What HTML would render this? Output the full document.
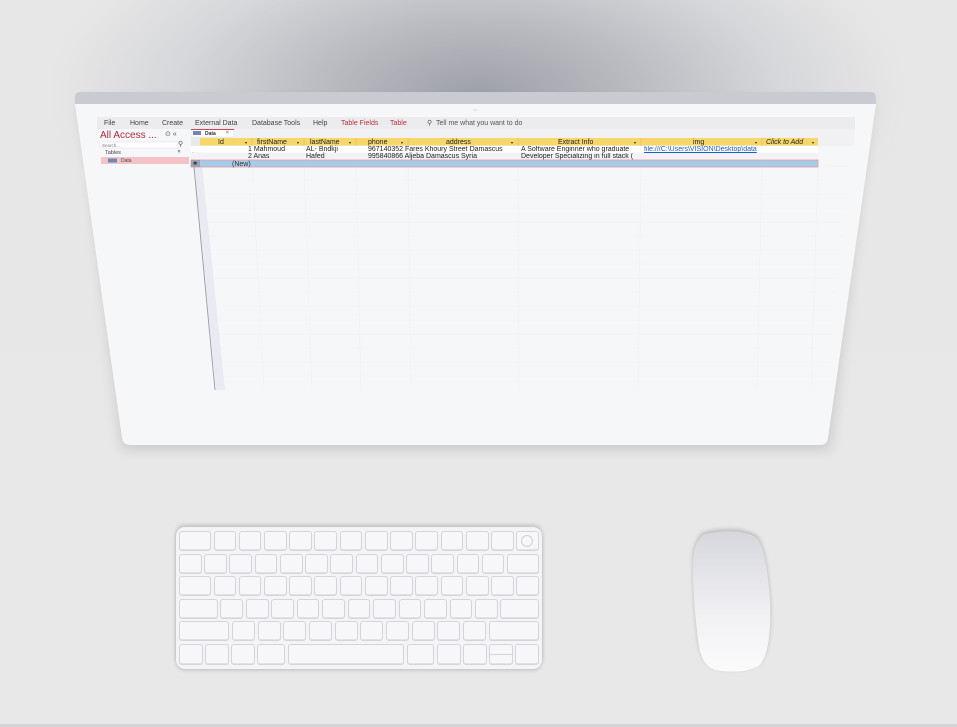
<!DOCTYPE html>
<html><head><meta charset="utf-8"><style>
*{margin:0;padding:0;box-sizing:border-box}
body{width:957px;height:727px;overflow:hidden;position:relative;font-family:"Liberation Sans",sans-serif;
background:radial-gradient(ellipse 430px 200px at 478px 95px,#9ea0a8 0%,#b9bac0 35%,#d6d7da 70%,#e7e7e7 100%),#e8e8e8;}
.bgfill{position:absolute;left:0;top:0;width:957px;height:727px;background:linear-gradient(#0000 0,#0000 300px,#e8e8e8 460px);}
.a{position:absolute;white-space:nowrap}
.t{font-size:7px;color:#222;line-height:7px}
.kb{position:absolute;left:176px;top:527px;width:366px;height:142px;border-radius:9px;background:#f4f4f6;box-shadow:0 -2px 4px rgba(0,0,0,.18),0 2px 3px rgba(0,0,0,.12);padding:4px 3px 3px 3px}
.row{display:flex;gap:2.6px;height:20px;margin-bottom:2.6px}
.k{flex:1;border:1px solid #d4d5da;border-radius:3px;background:#f7f7f9;box-shadow:inset 0 -1px 0 #e2e2e6}
</style></head><body>
<div class="bgfill"></div>
<svg class="a" style="left:0;top:0" width="957" height="727">
<defs><filter id="sh"><feGaussianBlur stdDeviation="6"/></filter>
<linearGradient id="mg" x1="0" y1="0" x2="0" y2="1"><stop offset="0" stop-color="#d6d7dd"/><stop offset=".6" stop-color="#f1f1f4"/><stop offset="1" stop-color="#fbfbfc"/></linearGradient>
<filter id="ms"><feGaussianBlur stdDeviation="2"/></filter></defs>
<polygon points="80,100 872,100 830,450 122,450" fill="#000" opacity=".12" filter="url(#sh)"/>
<path d="M80,92 L870,92 Q876,92 876,98 L876,104 L75,104 L75,98 Q75,92 80,92Z" fill="#c9cbd3"/>
<path d="M75,104 L876,104 L828,438 Q827,445 820,445 L130,445 Q123,445 122,438 Z" fill="#f6f7f9"/>
<polygon points="97,117 855,117 855,129 97,129" fill="#ececee"/>
<polygon points="191,129 855,129 853,146 191,146" fill="#f1f1f4"/>
<g stroke="#eef0f3" stroke-width=".5">
<line x1="200" y1="166" x2="850" y2="166"/><line x1="203" y1="180" x2="850" y2="180"/><line x1="204" y1="194" x2="848" y2="194"/>
<line x1="205" y1="208" x2="846" y2="208"/><line x1="206" y1="222" x2="845" y2="222"/><line x1="207" y1="236" x2="843" y2="236"/>
<line x1="208" y1="250" x2="842" y2="250"/><line x1="209" y1="264" x2="840" y2="264"/><line x1="210" y1="278" x2="839" y2="278"/>
<line x1="211" y1="292" x2="837" y2="292"/><line x1="212" y1="306" x2="836" y2="306"/><line x1="213" y1="320" x2="834" y2="320"/>
<line x1="214" y1="334" x2="833" y2="334"/><line x1="215" y1="348" x2="832" y2="348"/><line x1="216" y1="362" x2="830" y2="362"/><line x1="217" y1="376" x2="829" y2="376"/>
<line x1="252" y1="166" x2="264" y2="390"/><line x1="304" y1="166" x2="312" y2="390"/><line x1="356" y1="166" x2="361" y2="390"/>
<line x1="408" y1="166" x2="411" y2="390"/><line x1="518" y1="166" x2="519" y2="390"/><line x1="641" y1="166" x2="638" y2="390"/>
<line x1="762" y1="166" x2="757" y2="390"/><line x1="818" y1="166" x2="811" y2="390"/>
</g>
<polygon points="192,146 200,146 225,390 216,390" fill="#e9eaf2"/>
<line x1="192" y1="146" x2="215" y2="390" stroke="#9a9aa4" stroke-width=".9"/>
<rect x="200" y="138" width="618" height="7.5" fill="#f7d66a"/>
<rect x="191" y="138" width="9" height="7.5" fill="#e8e8ee"/>
<rect x="191" y="146" width="627" height="6.5" fill="#fff"/>
<rect x="191" y="153" width="627" height="6.5" fill="#f3f3f5"/>
<rect x="191" y="160" width="627" height="7" fill="#a9cbea" stroke="#e49a9a" stroke-width=".8"/>
<rect x="191" y="160" width="9" height="7" fill="#9aa0b5"/>
<g stroke="#d9c060" stroke-width=".6"><line x1="252" y1="138" x2="252" y2="146"/><line x1="304" y1="138" x2="304" y2="146"/><line x1="356" y1="138" x2="356" y2="146"/><line x1="408" y1="138" x2="408" y2="146"/><line x1="518" y1="138" x2="518" y2="146"/><line x1="641" y1="138" x2="641" y2="146"/><line x1="762" y1="138" x2="762" y2="146"/></g>
<rect x="191" y="129" width="43" height="8" fill="#fff" stroke="#ddd" stroke-width=".5"/>
<rect x="191" y="129" width="43" height="1" fill="#c9455a"/>
<rect x="193" y="131" width="8" height="4" fill="#6f86b8"/>
<rect x="100" y="142" width="78" height="6" fill="#fff" stroke="#ddd" stroke-width=".5"/>
<rect x="101" y="157" width="88" height="7" fill="#f4c3c6"/>
<rect x="108" y="158.5" width="9" height="4" fill="#6f86b8"/>
<path d="M705,534 Q740,527 757,538 Q766,548 770,600 Q772,650 760,665 Q745,675 715,670 Q700,665 698,640 Q692,590 693,560 Q695,538 705,534Z" fill="#000" opacity=".2" filter="url(#ms)" transform="translate(0,-2)"/>
<path d="M705,534 Q740,527 757,538 Q766,548 770,600 Q772,650 760,665 Q745,675 715,670 Q700,665 698,640 Q692,590 693,560 Q695,538 705,534Z" fill="url(#mg)"/>
</svg>
<div class="a" style="left:473px;top:106px;font-size:5px;color:#aaa">◡</div>
<div class="a t" style="left:104px;top:119.5px;color:#444">File</div>
<div class="a t" style="left:130px;top:119.5px;color:#444">Home</div>
<div class="a t" style="left:162px;top:119.5px;color:#444">Create</div>
<div class="a t" style="left:195px;top:119.5px;color:#444">External Data</div>
<div class="a t" style="left:252px;top:119.5px;color:#444">Database Tools</div>
<div class="a t" style="left:313px;top:119.5px;color:#444">Help</div>
<div class="a t" style="left:341px;top:119.5px;color:#b5333f">Table Fields</div>
<div class="a t" style="left:390px;top:119.5px;color:#b5333f">Table</div>
<div class="a t" style="left:427px;top:119.5px;color:#555">⚲ &nbsp;Tell me what you want to do</div>
<div class="a" style="left:100px;top:130px;font-size:10px;color:#b02b3a">All Access ...</div>
<div class="a t" style="left:165px;top:131px;color:#555">⊙ «</div>
<div class="a" style="left:102px;top:143px;font-size:4.5px;color:#777">Search...</div>
<div class="a t" style="left:178px;top:141px;color:#555">⚲</div>
<div class="a" style="left:105px;top:150px;font-size:5.5px;color:#444">Tables</div>
<div class="a" style="left:178px;top:150px;font-size:5.5px;color:#444">ᴿ</div>
<div class="a" style="left:121px;top:158px;font-size:5px;color:#444">Data</div>
<div class="a" style="left:205px;top:130.5px;font-size:5px;color:#333;font-weight:bold">Data</div>
<div class="a" style="left:225px;top:130px;font-size:5.5px;color:#888">✕</div>
<div class="a t" style="left:218px;top:138.5px">Id</div>
<div class="a t" style="left:257px;top:138.5px">firstName</div>
<div class="a t" style="left:310px;top:138.5px">lastName</div>
<div class="a t" style="left:368px;top:138.5px">phone</div>
<div class="a t" style="left:446px;top:138.5px">address</div>
<div class="a t" style="left:558px;top:138.5px">Extract Info</div>
<div class="a t" style="left:693px;top:138.5px">img</div>
<div class="a t" style="left:766px;top:138.5px;font-style:italic">Click to Add</div>
<div class="a t" style="left:245px;top:138.5px;font-size:4px">▾</div><div class="a t" style="left:297px;top:138.5px;font-size:4px">▾</div><div class="a t" style="left:349px;top:138.5px;font-size:4px">▾</div><div class="a t" style="left:401px;top:138.5px;font-size:4px">▾</div><div class="a t" style="left:511px;top:138.5px;font-size:4px">▾</div><div class="a t" style="left:634px;top:138.5px;font-size:4px">▾</div><div class="a t" style="left:755px;top:138.5px;font-size:4px">▾</div><div class="a t" style="left:812px;top:138.5px;font-size:4px">▾</div>
<div class="a t" style="left:248px;top:146px">1 Mahmoud</div>
<div class="a t" style="left:306px;top:146px">AL- Bndkji</div>
<div class="a t" style="left:368px;top:146px;width:150px;overflow:hidden">967140352 Fares Khoury Street Damascus</div>
<div class="a t" style="left:521px;top:146px;width:120px;overflow:hidden">A Software Enginner who graduate</div>
<div class="a t" style="left:644px;top:146px;color:#1a5fc8;text-decoration:underline;width:118px;overflow:hidden">file:///C:\Users\VISION\Desktop\data</div>
<div class="a t" style="left:248px;top:153px">2 Anas</div>
<div class="a t" style="left:306px;top:153px">Hafed</div>
<div class="a t" style="left:368px;top:153px">995840866 Aljeba Damascus Syria</div>
<div class="a t" style="left:521px;top:153px;width:120px;overflow:hidden">Developer Specializing in full stack (</div>
<div class="a t" style="left:232px;top:160.5px;color:#333">(New)</div>
<div class="a t" style="left:193px;top:160.5px;font-size:5px;color:#333">✱</div>
<div class="kb">
<div class="row"><div class="k" style="flex:1.45"></div><div class="k"></div><div class="k"></div><div class="k"></div><div class="k"></div><div class="k"></div><div class="k"></div><div class="k"></div><div class="k"></div><div class="k"></div><div class="k"></div><div class="k"></div><div class="k"></div><div class="k" style="position:relative"><div style="position:absolute;left:4px;top:3px;width:12px;height:12px;border-radius:50%;border:1px solid #d0d0d6"></div></div></div>
<div class="row"><div class="k"></div><div class="k"></div><div class="k"></div><div class="k"></div><div class="k"></div><div class="k"></div><div class="k"></div><div class="k"></div><div class="k"></div><div class="k"></div><div class="k"></div><div class="k"></div><div class="k"></div><div class="k" style="flex:1.45"></div></div>
<div class="row"><div class="k" style="flex:1.45"></div><div class="k"></div><div class="k"></div><div class="k"></div><div class="k"></div><div class="k"></div><div class="k"></div><div class="k"></div><div class="k"></div><div class="k"></div><div class="k"></div><div class="k"></div><div class="k"></div><div class="k"></div></div>
<div class="row"><div class="k" style="flex:1.75"></div><div class="k"></div><div class="k"></div><div class="k"></div><div class="k"></div><div class="k"></div><div class="k"></div><div class="k"></div><div class="k"></div><div class="k"></div><div class="k"></div><div class="k"></div><div class="k" style="flex:1.75"></div></div>
<div class="row"><div class="k" style="flex:2.3"></div><div class="k"></div><div class="k"></div><div class="k"></div><div class="k"></div><div class="k"></div><div class="k"></div><div class="k"></div><div class="k"></div><div class="k"></div><div class="k"></div><div class="k" style="flex:2.3"></div></div>
<div class="row" style="height:21px"><div class="k"></div><div class="k"></div><div class="k"></div><div class="k" style="flex:1.2"></div><div class="k" style="flex:5.3"></div><div class="k" style="flex:1.2"></div><div class="k"></div><div class="k"></div><div class="k" style="position:relative"><div style="position:absolute;left:0;right:0;top:9px;border-top:1px solid #d4d5da"></div></div><div class="k"></div></div>
</div>
<div class="a" style="left:0;top:724px;width:957px;height:3px;background:#d4d4d6"></div>
</body></html>
